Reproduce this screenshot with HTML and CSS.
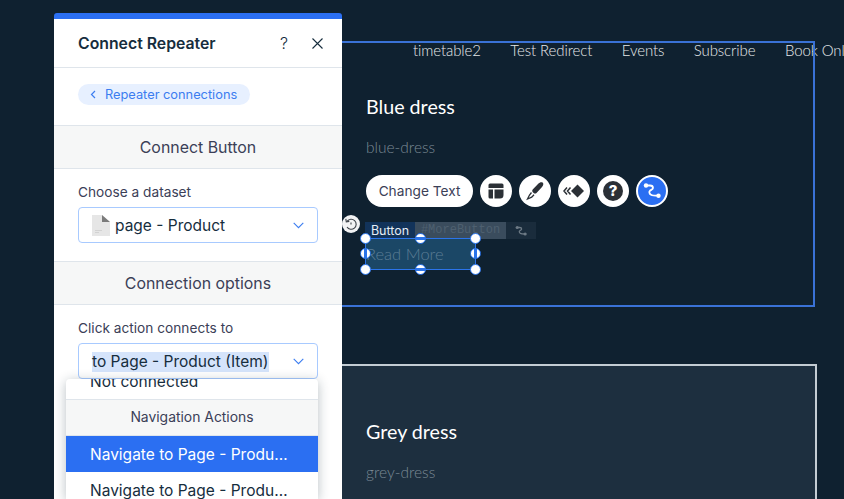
FILE: index.html
```html
<!DOCTYPE html>
<html lang="en">
  <head>
    <meta charset="UTF-8" />
    <meta name="viewport" content="width=device-width, initial-scale=1.0" />
    <title>Connect Repeater</title>
    <link rel="stylesheet" href="styles.css">
  </head>
  <body>
    <main class="canvas">
      <section class="item item-selected">
        <nav class="site-nav">
          <span>timetable2</span>
          <span>Test Redirect</span>
          <span>Events</span>
          <span>Subscribe</span>
          <span>Book Online</span>
        </nav>
        <h2 class="item-title">Blue dress</h2>
        <p class="item-slug">blue-dress</p>
        <div class="toolbar">
          <button class="tool-pill">Change Text</button>
          <button class="tool-round">
            <svg width="18" height="18" viewBox="0 0 18 18"><path fill="#2b3036" d="M3 1.5h12a1.5 1.5 0 0 1 1.5 1.5v3h-15V3A1.5 1.5 0 0 1 3 1.5zM1.5 7.5H6v9H3A1.500 1.500 0 0 1 1.500 15zM7.500 7.500h9V13a3.500 3.500 0 0 1-3.500 3.500H7.500z"/></svg>
          </button>
          <button class="tool-round">
            <svg width="20" height="20" viewBox="0 0 20 20"><path fill="#2b3036" d="M17.800 1.800c1 .9.500 2.700-1 4.500L11.500 12c-.8.800-2 .800-2.800.100l-.9-.8c-.7-.7-.8-1.900-.1-2.700l5.300-5.600c1.700-1.700 3.700-2.100 4.800-1.200z"/><path fill="none" stroke="#2b3036" stroke-width="1.300" d="M6.500 11.500 4.500 14l-2 4 4.200-1.800 2.300-2.400"/></svg>
          </button>
          <button class="tool-round">
            <svg width="24" height="18" viewBox="0 0 24 18"><path fill="#2b3036" d="M15.500 2.500l6.500 6.500-6.500 6.500L9 9z"/><path fill="none" stroke="#2b3036" stroke-width="1.500" d="M5 5.500 2 9l3 3.500M8.500 5.500 5.500 9l3 3.500"/></svg>
          </button>
          <button class="tool-round">
            <svg width="22" height="22" viewBox="0 0 22 22"><circle cx="11" cy="11" r="10" fill="#2b3036"/><text x="11" y="16" class="help-mark">?</text></svg>
          </button>
          <button class="tool-round tool-active">
            <svg width="22" height="22" viewBox="0 0 22 22"><path fill="none" stroke="#fff" stroke-width="1.800" d="M5 5.500h4c2 0 3 1 3 2.500s-2 2-3 2.700-1 3 1 4c1.200.7 4 1 7 1"/><circle cx="5" cy="5.500" r="2.200" fill="#fff"/><circle cx="17.500" cy="15.700" r="2.200" fill="#fff"/></svg>
          </button>
        </div>
        <div class="el-label">
          <span class="el-type">Button</span>
          <span class="el-id">#MoreButton</span>
          <span class="el-link">
            <svg width="14" height="14" viewBox="0 0 22 22"><path fill="none" stroke="#6d7a85" stroke-width="2" d="M5 5.500h4c2 0 3 1 3 2.500s-2 2-3 2.700-1 3 1 4c1.200.7 4 1 7 1"/><circle cx="5" cy="5.500" r="2.500" fill="#6d7a85"/><circle cx="17.500" cy="15.700" r="2.500" fill="#6d7a85"/></svg>
          </span>
        </div>
        <div class="read-more">
          Read More
          <i class="handle h-tl"></i><i class="handle h-tc"></i><i class="handle h-tr"></i>
          <i class="handle h-ml"></i><i class="handle h-mr"></i>
          <i class="handle h-bl"></i><i class="handle h-bc"></i><i class="handle h-br"></i>
        </div>
      </section>

      <section class="item item-plain">
        <h2 class="item-title">Grey dress</h2>
        <p class="item-slug">grey-dress</p>
      </section>
    </main>

    <button class="rotate">
      <svg width="14" height="14" viewBox="0 0 14 14"><path fill="none" stroke="#3c4248" stroke-width="1.100" d="M3.200 4.200A5 5 0 1 1 3 10M1.800 1.800l.5 3 3-.4"/><path fill="none" stroke="#3c4248" stroke-width="1.100" d="M7 5.500V7.500"/></svg>
    </button>

    <aside class="panel">
      <header class="panel-head">
        <h1>Connect Repeater</h1>
        <span class="panel-help">?</span>
        <svg class="panel-close" width="11" height="11" viewBox="0 0 11 11"><path stroke="#162d3d" stroke-width="1.100" d="M.5.500l10 10M10.500.500l-10 10"/></svg>
      </header>
      <div class="back-row">
        <a class="back-link">
          <svg width="6" height="9" viewBox="0 0 6 9"><path fill="none" stroke="#3b7df0" stroke-width="1.200" d="M5 1 1.500 4.500 5 8"/></svg>
          Repeater connections
        </a>
      </div>
      <div class="section-bar">Connect Button</div>
      <div class="field">
        <label>Choose a dataset</label>
        <div class="select">
          <svg class="doc-icon" width="18" height="21" viewBox="0 0 18 21"><path fill="#e6e6e6" d="M0 0h10l8 7v14H0z"/><path fill="#7b7b7b" d="M10 0l8 7h-8z"/><path fill="#d2d2d2" d="M3 15h7v1H3zM3 17h4v1H3z"/></svg>
          <span>page - Product</span>
          <svg class="chev" width="11" height="7" viewBox="0 0 11 7"><path fill="none" stroke="#3b7df0" stroke-width="1.100" d="M.7.800l4.800 4.800L10.300.800"/></svg>
        </div>
      </div>
      <div class="section-bar">Connection options</div>
      <div class="field">
        <label>Click action connects to</label>
        <div class="select">
          <span class="select-text">to Page - Product (Item)</span>
          <svg class="chev" width="11" height="7" viewBox="0 0 11 7"><path fill="none" stroke="#3b7df0" stroke-width="1.100" d="M.7.800l4.800 4.800L10.300.800"/></svg>
        </div>
      </div>
      <div class="dropdown">
        <div class="option option-first">Not connected</div>
        <div class="option-group">Navigation Actions</div>
        <div class="option option-on">Navigate to Page - Product (Item)</div>
        <div class="option">Navigate to Page - Product (Item)</div>
      </div>
    </aside>
  </body>
</html>
```

FILE: styles.css
```css
* {
  box-sizing: border-box;
}
html,
body {
  margin: 0;
  height: 499px;
  overflow: hidden;
}
body {
  background-color: #0f2130;
  font-family: "Inter", "Noto Sans", sans-serif;
  position: relative;
}
button {
  font-family: inherit;
  border: 0;
  padding: 0;
}

/* page on the canvas */
.canvas {
  padding: 41px 0 0 60px;
  font-family: "Lato", sans-serif;
  font-weight: 300;
  color: #fff;
}
.item {
  position: relative;
  padding-left: 306px;
  width: 755px;
}
.item-selected {
  height: 266px;
  padding-top: 1px;
  background-color: #0f2130;
}
.item-selected::after {
  content: "";
  position: absolute;
  inset: 0;
  border: 2px solid #3a72d6;
  pointer-events: none;
}
.item-plain {
  margin-top: 57px;
  padding-left: 304px;
  width: 757px;
  height: 135px;
  padding-top: 53px;
  background-color: #1d2f3f;
  border: 2px solid #c3ccd3;
  border-bottom: 0;
}
.site-nav {
  display: flex;
  gap: 29.500px;
  margin-left: 47px;
  height: 16px;
  font-size: 15px;
  line-height: 16px;
  letter-spacing: -0.1px;
  white-space: nowrap;
  color: #e6e9eb;
}
.item-title {
  margin: 36px 0 0;
  font-size: 19.700px;
  line-height: 26px;
  font-weight: 400;
}
.item-plain .item-title {
  margin-top: 0;
}
.item-slug {
  margin: 17px 0 0;
  font-size: 15.500px;
  line-height: 20px;
  color: #7a8994;
}

/* element toolbar */
.toolbar {
  display: flex;
  gap: 7px;
  margin-top: 18px;
  font-family: "Inter", sans-serif;
}
.tool-pill {
  width: 107px;
  height: 32px;
  border-radius: 16px;
  background-color: #fff;
  color: #3b4057;
  font-size: 13.700px;
}
.tool-round {
  display: flex;
  align-items: center;
  justify-content: center;
  width: 32px;
  height: 32px;
  border-radius: 50%;
  background-color: #fff;
}
.tool-active {
  background-color: #2b6ff2;
  border: 2px solid #fff;
}
.help-mark {
  fill: #fff;
  font-size: 15px;
  font-weight: 800;
  text-anchor: middle;
}
.el-label {
  display: flex;
  height: 17px;
  margin: 15px 0 0 -1px;
  font-family: "Inter", sans-serif;
  font-size: 12.500px;
  line-height: 17px;
  font-weight: 400;
}
.el-type {
  width: 50px;
  text-align: center;
  background-color: #12335a;
  color: #e6edf5;
}
.el-id {
  width: 91px;
  font-size: 12px;
  text-align: center;
  background-color: #3a4c5d;
  color: #4e6070;
  font-family: "Liberation Mono", monospace;
}
.el-link {
  display: flex;
  align-items: center;
  justify-content: center;
  width: 30px;
  background-color: #1a2c3c;
}
.read-more {
  position: relative;
  width: 111px;
  height: 32px;
  margin: -1px 0 0 -1px;
  border: 1px solid #2b74ea;
  background-color: #1b4766;
  color: #5b7d95;
  font-size: 16.500px;
  line-height: 30px;
}
.handle {
  position: absolute;
  width: 11px;
  height: 11px;
  border-radius: 50%;
  background-color: #fff;
  border: 1.500px solid #2b74ea;
}
.h-tl { left: -6px; top: -6px; }
.h-tc { left: 49px; top: -6px; background: linear-gradient(#fff 38%, #2b74ea 38% 62%, #fff 62%); }
.h-tr { right: -6px; top: -6px; }
.h-ml { left: -6px; top: 9px; background: linear-gradient(90deg, #fff 38%, #2b74ea 38% 62%, #fff 62%); }
.h-mr { right: -6px; top: 9px; background: linear-gradient(90deg, #fff 38%, #2b74ea 38% 62%, #fff 62%); }
.h-bl { left: -6px; bottom: -6px; }
.h-bc { left: 49px; bottom: -6px; background: linear-gradient(#fff 38%, #2b74ea 38% 62%, #fff 62%); }
.h-br { right: -6px; bottom: -6px; }
.rotate {
  position: absolute;
  left: 342px;
  top: 215px;
  display: flex;
  align-items: center;
  justify-content: center;
  width: 18px;
  height: 18px;
  border-radius: 50%;
  background-color: #f2f3f4;
}

/* connect panel */
.panel {
  position: absolute;
  left: 54px;
  top: 13px;
  width: 288px;
  height: 486px;
  display: flex;
  flex-direction: column;
  background-color: #fff;
  border-top: 6px solid #2b6ff2;
  border-radius: 3px 3px 0 0;
  color: #162d3d;
}
.panel-head {
  display: flex;
  align-items: center;
  height: 49px;
  flex: none;
  padding: 0 19px 0 24px;
  border-bottom: 1px solid #dfe5eb;
}
.panel-head h1 {
  flex: 1;
  margin: 0;
  font-size: 15.800px;
  font-weight: 600;
}
.panel-help {
  margin-right: 24px;
  font-size: 16px;
  font-weight: 300;
  color: #162d3d;
}
.back-row {
  height: 57px;
  flex: none;
  padding: 15px 24px 0;
}
.back-link {
  display: inline-flex;
  align-items: center;
  gap: 9px;
  width: 172px;
  height: 21px;
  padding-left: 12px;
  border-radius: 11px;
  background-color: #e7f0ff;
  color: #3b7df0;
  font-size: 12.800px;
}
.section-bar {
  height: 44px;
  flex: none;
  background-color: #f6f7f7;
  border-top: 1px solid #dfe5eb;
  border-bottom: 1px solid #dfe5eb;
  text-align: center;
  font-size: 15.900px;
  line-height: 43px;
  color: #3b4057;
}
.field {
  height: 92px;
  flex: none;
  padding: 15px 24px 0;
}
.field label {
  display: block;
  height: 23px;
  font-size: 13.700px;
  line-height: 17px;
  color: #3b4057;
}
.select {
  display: flex;
  align-items: center;
  height: 36px;
  padding: 0 13px;
  border: 1px solid #a8caff;
  border-radius: 4px;
  font-size: 15.500px;
}
.select span {
  flex: 1;
}
.doc-icon {
  margin-right: 5px;
}
.select span.select-text {
  flex: none;
  margin: 1px auto 0 0;
  line-height: 20px;
  background-color: #d5e4fb;
}
.dropdown {
  position: absolute;
  left: 12px;
  right: 24px;
  top: 360px;
  bottom: 0;
  overflow: hidden;
  background-color: #fff;
  border-radius: 4px 4px 0 0;
  box-shadow: 0 2px 12px rgba(22, 45, 61, 0.3);
}
.option {
  height: 36px;
  padding: 0 24px;
  font-size: 15.500px;
  line-height: 37px;
  white-space: nowrap;
  overflow: hidden;
  text-overflow: ellipsis;
}
.option-first {
  margin-top: -16px;
  height: 36px;
}
.option-on {
  background-color: #2b6ff2;
  color: #fff;
}
.option-group {
  height: 37px;
  background-color: #f6f7f7;
  border-top: 1px solid #dfe5eb;
  border-bottom: 1px solid #dfe5eb;
  text-align: center;
  font-size: 13.900px;
  line-height: 35px;
  color: #3b4057;
}
```
